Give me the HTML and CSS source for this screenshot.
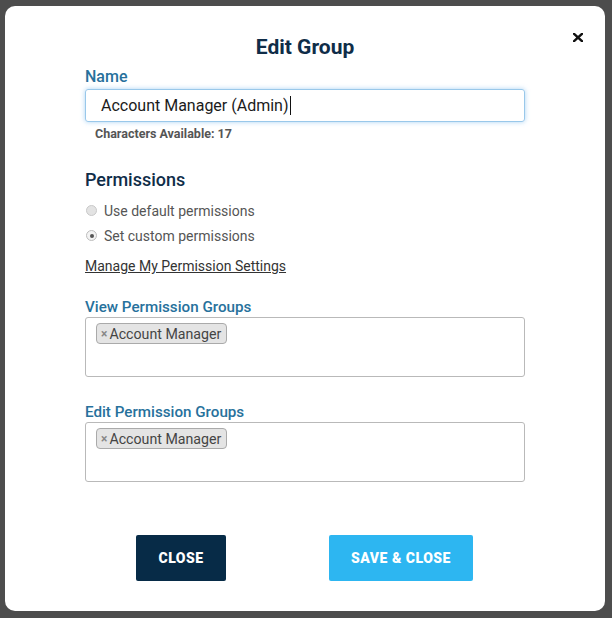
FILE: index.html
```html
<!DOCTYPE html>
<html>
<head>
<meta charset="utf-8">
<link rel="stylesheet" href="styles.css">
</head>
<body>
<div class="modal">
  <button class="modal-x" aria-label="Close">
    <svg width="10" height="9" viewBox="0 0 10 9"><path d="M1 0.8 L9 8.2 M9 0.8 L1 8.2" stroke="#111" stroke-width="2.4" stroke-linecap="square"/></svg>
  </button>
  <h1 class="title">Edit Group</h1>
  <label class="field-label name-label">Name</label>
  <div class="text-input">Account Manager (Admin)<span class="caret"></span></div>
  <div class="chars">Characters Available: 17</div>

  <h2 class="section">Permissions</h2>
  <div class="radio-row"><span class="radio"></span><span>Use default permissions</span></div>
  <div class="radio-row"><span class="radio checked"></span><span>Set custom permissions</span></div>
  <a class="manage-link">Manage My Permission Settings</a>

  <label class="field-label group-label first">View Permission Groups</label>
  <div class="tag-box"><span class="tag"><span class="tag-x">×</span>Account Manager</span></div>

  <label class="field-label group-label">Edit Permission Groups</label>
  <div class="tag-box"><span class="tag"><span class="tag-x">×</span>Account Manager</span></div>

  <div class="actions">
    <button class="btn btn-dark">CLOSE</button>
    <button class="btn btn-light">SAVE &amp; CLOSE</button>
  </div>
</div>
</body>
</html>
```
FILE: styles.css
```css
html, body {
  margin: 0;
  padding: 0;
  background: #4d4d4d;
}
body {
  font-family: Roboto, "Liberation Sans", sans-serif;
  padding-top: 6px;
  padding-left: 5px;
}
.modal {
  position: relative;
  width: 600px;
  height: 605px;
  box-sizing: border-box;
  background: #fff;
  border-radius: 10px;
  padding: 29px 80px 0 80px;
  display: flex;
  flex-direction: column;
}
.modal-x {
  position: absolute;
  right: 22px;
  top: 27px;
  border: 0;
  background: none;
  padding: 0;
  width: 10px;
  height: 9px;
  display: block;
}
.modal-x svg { display: block; }
.title {
  margin: 0 0 8px 0;
  text-align: center;
  font-size: 21px;
  line-height: 24px;
  font-weight: 700;
  color: #0f2d48;
}
.field-label {
  display: block;
  font-size: 16px;
  line-height: 20px;
  font-weight: 500;
  color: #27719c;
}
.name-label { margin-bottom: 2px; }
.text-input {
  height: 33px;
  box-sizing: border-box;
  border: 1px solid #99c8ea;
  border-radius: 3px;
  box-shadow: 0 0 5px rgba(102, 175, 233, 0.55);
  padding-left: 15px;
  font-size: 16px;
  line-height: 31px;
  color: #1b1b1b;
  display: flex;
  align-items: center;
}
.caret {
  display: inline-block;
  width: 1px;
  height: 19px;
  background: #111;
  margin-left: 1px;
}
.chars {
  margin-top: 4px;
  padding-left: 10px;
  font-size: 12.5px;
  line-height: 16px;
  font-weight: 700;
  color: #555;
}
.section {
  margin: 27px 0 7px 0;
  font-size: 18px;
  line-height: 22px;
  font-weight: 500;
  color: #0f2d48;
}
.radio-row {
  display: flex;
  align-items: center;
  height: 25px;
  font-size: 14px;
  color: #555;
}
.radio {
  width: 11px;
  height: 11px;
  box-sizing: border-box;
  border-radius: 50%;
  border: 1px solid #c9c9c9;
  background: #e3e3e3;
  margin-left: 1px;
  margin-right: 7px;
  position: relative;
}
.radio.checked {
  background: #f3f3f3;
  border-color: #bdbdbd;
}
.radio.checked::after {
  content: "";
  position: absolute;
  left: 2.5px;
  top: 2.5px;
  width: 4px;
  height: 4px;
  border-radius: 50%;
  background: #555;
}
.manage-link {
  margin-top: 8px;
  font-size: 14px;
  line-height: 20px;
  color: #333;
  text-decoration: underline;
  align-self: flex-start;
}
.group-label { margin-top: 25px; font-size: 15.2px; }
.group-label.first { margin-top: 21px; }
.tag-box {
  height: 60px;
  box-sizing: border-box;
  border: 1px solid #b9b9b9;
  border-radius: 3px;
  padding: 5px 10px;
  display: flex;
  align-items: flex-start;
}
.tag {
  display: inline-flex;
  align-items: center;
  height: 21px;
  box-sizing: border-box;
  border: 1px solid #aaa;
  border-radius: 4px;
  background: #e4e4e4;
  padding: 0 5px 0 4px;
  font-size: 14.2px;
  color: #444;
}
.tag-x {
  color: #888;
  font-weight: 700;
  font-size: 12px;
  margin-right: 2px;
}
.actions {
  margin-top: 53px;
  display: flex;
  justify-content: flex-start;
  padding-left: 51px;
  gap: 103px;
}
.btn {
  height: 46px;
  border: 0;
  border-radius: 2px;
  font-family: Roboto, "Liberation Sans", sans-serif;
  font-size: 14px;
  font-weight: 900;
  letter-spacing: 0.5px;
  color: #fff;
  padding: 0;
}
.btn-dark { background: #072b47; width: 90px; }
.btn-light { background: #2db6f1; width: 144px; }
```
